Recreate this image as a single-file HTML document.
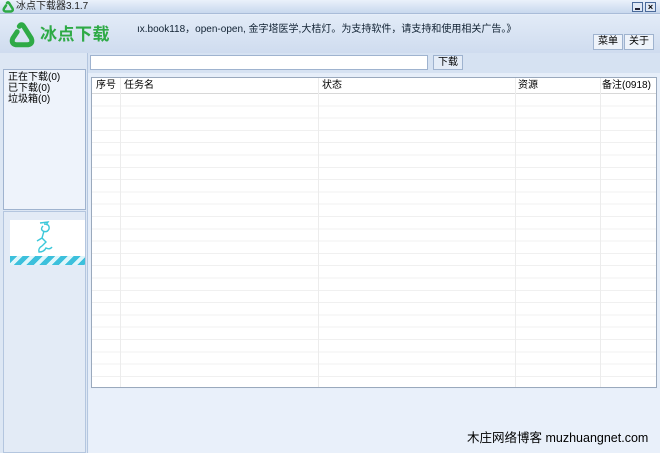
<!DOCTYPE html>
<html><head><meta charset="utf-8"><style>
*{margin:0;padding:0;box-sizing:border-box}
body{width:660px;height:453px;overflow:hidden;background:#e6eef9;font-family:"Liberation Sans","Noto Sans CJK SC",sans-serif;font-size:10px;color:#000;position:relative}
.a{position:absolute}
</style></head><body>
<div class="a" style="left:0;top:0;width:660px;height:14px;background:linear-gradient(#eaf1fb,#c8d8ee);border-bottom:1px solid #a9bcd8"></div>
<svg class="a" style="left:2px;top:1px" width="12" height="12" viewBox="0 0 24 24"><path d="M10 4 Q12 1 14 4 L21 15 Q23 20 18 21 L7 21 Q2 20 4 15 L8 9" fill="none" stroke="#2eaa46" stroke-width="5" stroke-linecap="round"/></svg>
<div class="a" style="left:16px;top:1px;font-size:10px;line-height:12px;color:#222">冰点下载器3.1.7</div>
<div class="a" style="left:632px;top:2px;width:11px;height:10px;border:1px solid #4a6a9a;background:#dfe8f5"><div style="margin:5px 2px 0;height:2px;background:#223"></div></div>
<div class="a" style="left:645px;top:2px;width:11px;height:10px;border:1px solid #4a6a9a;background:#dfe8f5;font-size:9px;line-height:8px;text-align:center;font-weight:bold">×</div>
<div class="a" style="left:0;top:15px;width:660px;height:38px;background:linear-gradient(#e2ebf7,#cfdcef)"></div>
<svg class="a" style="left:8px;top:22px" width="27" height="26" viewBox="0 0 24 24"><path d="M10 4 Q12 1 14 4 L21 15 Q23 20 18 21 L7 21 Q2 20 4 15 L8 9" fill="none" stroke="#2eaa46" stroke-width="4.6" stroke-linecap="round"/></svg>
<div class="a" style="left:40px;top:25px;font-size:17px;line-height:20px;font-weight:bold;color:#2eaa46;letter-spacing:0.5px">冰点下载</div>
<div class="a" style="left:137px;top:24px;font-size:10px;line-height:12px;color:#123">ıx.book118，open-open, 金字塔医学,大桔灯。为支持软件，请支持和使用相关广告。》</div>
<div class="a" style="left:593px;top:34px;width:30px;height:16px;border:1px solid #9fb3cf;background:#eef3fa;text-align:center;line-height:14px">菜单</div>
<div class="a" style="left:624px;top:34px;width:30px;height:16px;border:1px solid #9fb3cf;background:#eef3fa;text-align:center;line-height:14px">关于</div>
<div class="a" style="left:0;top:53px;width:660px;height:20px;background:#d6e2f2"></div>
<div class="a" style="left:90px;top:55px;width:338px;height:15px;background:#fff;border:1px solid #9fb3cf"></div>
<div class="a" style="left:433px;top:55px;width:30px;height:15px;border:1px solid #9fb3cf;background:#e4ecf7;text-align:center;line-height:13px">下载</div>
<div class="a" style="left:0;top:53px;width:88px;height:400px;background:#dde7f4;border-right:1px solid #b4c6df"></div>
<div class="a" style="left:3px;top:69px;width:83px;height:141px;background:#eef3fb;border:1px solid #9fb3cf;padding:2px 0 0 4px;font-size:10px;line-height:11px">正在下载(0)<br>已下载(0)<br>垃圾箱(0)</div>
<div class="a" style="left:3px;top:211px;width:83px;height:242px;background:#e3ebf6;border:1px solid #b4c6df"></div>
<div class="a" style="left:10px;top:220px;width:75px;height:45px;background:#fff"></div>
<svg class="a" style="left:34px;top:220px" width="24" height="34" viewBox="0 0 24 34" fill="none" stroke="#3cc8da" stroke-width="1.4"><path d="M6 3 L14 2 L12 5 M10 4 Q16 4 15 9 Q13 13 9 11 Q6 9 9 6"/><path d="M10 11 L8 18 L12 22 L8 26 M8 18 L3 21 M8 26 Q4 28 5 32 Q10 32 12 28 Q16 30 18 27"/></svg>
<div class="a" style="left:10px;top:256px;width:75px;height:9px;background:repeating-linear-gradient(135deg,#3cc0dc 0 5px,#dff6fb 5px 9px)"></div>
<div class="a" style="left:91px;top:77px;width:566px;height:311px;background-color:#fff;border:1px solid #9aa9bd;background-image:repeating-linear-gradient(#fff 0 11.3px,#f0f0f0 11.3px 12.3px);background-position:0 16px"></div>
<div class="a" style="left:92px;top:78px;width:564px;height:16px;background:#fff;border-bottom:1px solid #d8d8d8;line-height:16px;font-size:10px">
<span class="a" style="left:4px">序号</span><span class="a" style="left:32px">任务名</span><span class="a" style="left:230px">状态</span><span class="a" style="left:426px">资源</span><span class="a" style="left:510px">备注(0918)</span></div>
<div class="a" style="left:120px;top:78px;width:1px;height:309px;background:#ececec"></div>
<div class="a" style="left:318px;top:78px;width:1px;height:309px;background:#ececec"></div>
<div class="a" style="left:515px;top:78px;width:1px;height:309px;background:#ececec"></div>
<div class="a" style="left:600px;top:78px;width:1px;height:309px;background:#ececec"></div>
<div class="a" style="left:89px;top:389px;width:571px;height:64px;background:#e9f0fa"></div>
<div class="a" style="left:467px;top:430px;font-size:12.5px;line-height:17px;color:#000">木庄网络博客 muzhuangnet.com</div>
</body></html>
